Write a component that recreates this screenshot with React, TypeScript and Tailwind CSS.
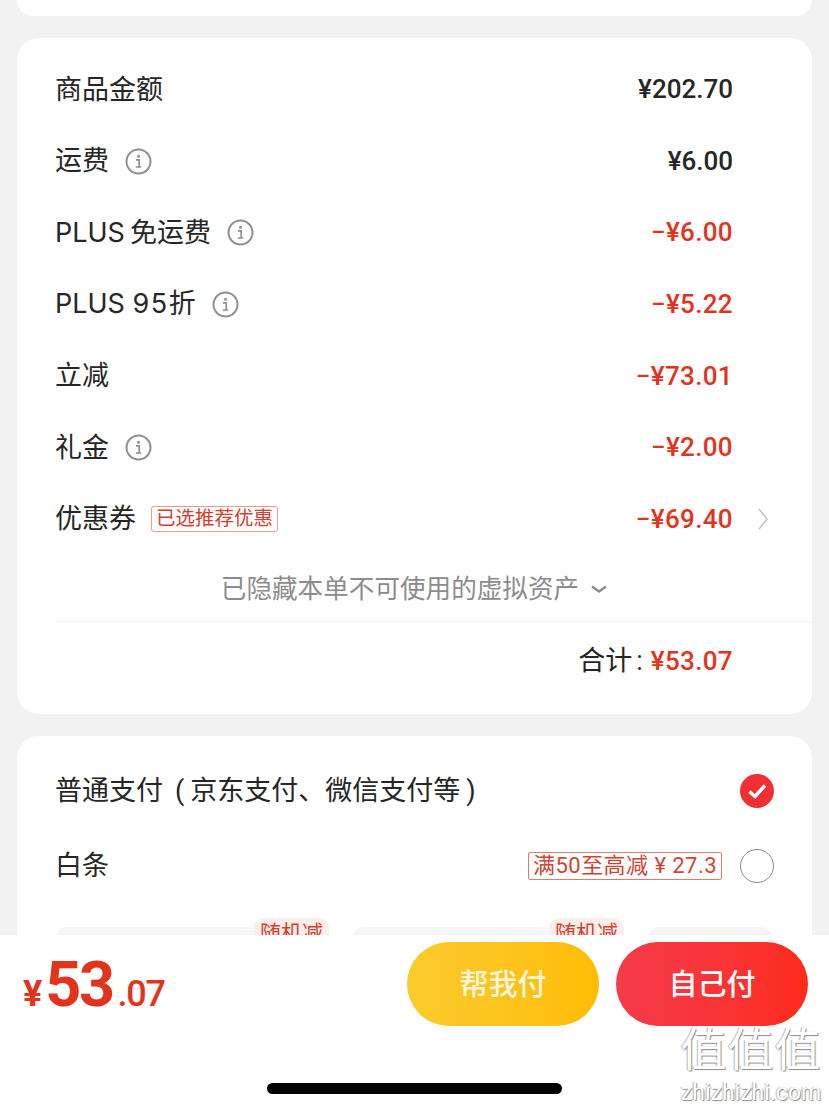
import type { ReactNode } from 'react';

const sans = "font-['Roboto','Noto_Sans_CJK_SC',sans-serif]";
const labelFont = "font-['Inter','Noto_Sans_CJK_SC',sans-serif]";

function InfoIcon() {
  return (
    <svg width="27" height="27" viewBox="0 0 27 27" fill="none" className="shrink-0">
      <circle cx="13.5" cy="13.5" r="12" stroke="#8f8f8f" strokeWidth="2" />
      <circle cx="13.5" cy="8.2" r="1.5" fill="#8f8f8f" />
      <path d="M11 11.8h3.2v7M10.8 19h5.4" stroke="#8f8f8f" strokeWidth="1.7" />
    </svg>
  );
}

function Row({
  label,
  value,
  red,
  info,
}: {
  label: ReactNode;
  value: string;
  red?: boolean;
  info?: boolean;
}) {
  return (
    <div className="h-[71.6px] flex items-center justify-between pr-[79px]">
      <div className={`flex items-center gap-[16px] text-[27px] text-[#262626] ${labelFont}`}>
        <span>{label}</span>
        {info && <InfoIcon />}
      </div>
      <span
        className={
          red
            ? 'text-[26px] font-medium tracking-[0.35px] text-[#e2341d]'
            : 'text-[26px] font-medium text-[#262626]'
        }
      >
        {value}
      </span>
    </div>
  );
}

export default function App() {
  return (
    <div className={`relative h-[1111px] w-[829px] overflow-hidden bg-[#f2f2f2] ${sans}`}>
      <div className="h-[935px] overflow-hidden px-[17px]">
        <div className="h-[16px] rounded-b-[20px] bg-white" />

        <section className="mt-[22px] h-[676px] rounded-[22px] bg-white pl-[38px] pt-[16px]">
          <Row label="商品金额" value="¥202.70" />
          <Row label="运费" value="¥6.00" info />
          <Row
            label={
              <>
                PLUS<span className="ml-[5px]">免运费</span>
              </>
            }
            value="−¥6.00"
            red
            info
          />
          <Row
            label={
              <>
                PLUS <span className="tracking-[1.5px]">95</span>折
              </>
            }
            value="−¥5.22"
            red
            info
          />
          <Row label="立减" value="−¥73.01" red />
          <Row label="礼金" value="−¥2.00" red info />

          <div className="h-[71.6px] flex items-center justify-between pr-[43px]">
            <div className="flex items-center gap-[15px] text-[27px] text-[#262626]">
              <span>优惠券</span>
              <span className="h-[26px] rounded-[3px] border border-[#eb9a8e] px-[4px] text-[19.5px] leading-[24px] text-[#d5402c]">
                已选推荐优惠
              </span>
            </div>
            <div className="flex items-center gap-[24px]">
              <span className="text-[26px] font-medium tracking-[0.35px] text-[#e2341d]">−¥69.40</span>
              <svg width="12" height="24" viewBox="0 0 12 24" fill="none">
                <path d="M2 2l8 10-8 10" stroke="#c4c4c4" strokeWidth="1.6" />
              </svg>
            </div>
          </div>

          <div className="flex h-[66px] items-center justify-center gap-[11px] pr-[38px] pt-[2px] text-[25.6px] text-[#8c8c8c]">
            <span>已隐藏本单不可使用的虚拟资产</span>
            <svg width="18" height="10" viewBox="0 0 18 10" fill="none">
              <path d="M2 2.5l7 5 7-5" stroke="#8c8c8c" strokeWidth="2.4" />
            </svg>
          </div>

          <div className="flex h-[80px] items-center justify-end gap-[8px] border-t border-[#f5f5f5] pr-[79px]">
            <span className="text-[27px] text-[#262626]">
              合计<span className="ml-[4px]">:</span>
            </span>
            <span className="text-[26px] font-medium tracking-[0.35px] text-[#e2341d]">¥53.07</span>
          </div>
        </section>

        <section className="mt-[22px] h-[300px] rounded-[22px] bg-white pl-[38px] pr-[38px]">
          <div className="flex h-[110px] items-center justify-between">
            <span className="text-[27px] text-[#262626]">
              普通支付<span className="ml-[12px] mr-[6px]">(</span>京东支付、微信支付等
              <span className="ml-[6px]">)</span>
            </span>
            <svg width="34" height="34" viewBox="0 0 34 34">
              <circle cx="17" cy="17" r="17" fill="#ee3035" />
              <path d="M9.5 17.5l5.5 5 10-11" fill="none" stroke="#fff" strokeWidth="3.4" />
            </svg>
          </div>
          <div className="-mt-[3px] flex h-[46px] items-center justify-between">
            <span className="text-[27px] text-[#262626]">白条</span>
            <div className="flex items-center gap-[18px]">
              <span className="h-[28px] rounded-[2px] border border-[#dd7b6e] px-[4px] text-[22px] leading-[26px] tracking-[0.45px] text-[#cf4534]">
                满50至高减 ¥ 27.3
              </span>
              <span className="h-[34px] w-[34px] rounded-full border border-[#8a8a8a]" />
            </div>
          </div>

          <div className="mt-[38px] flex gap-[23px] pr-[1px]">
            <div className="relative h-[40px] w-[274px] rounded-t-[12px] bg-[#f7f7f7]">
              <span className="absolute right-0 -top-[9px] rounded-[10px] bg-[#fdeeec] px-[6px] text-[21px] leading-[30px] text-[#d5402c]">
                随机减
              </span>
            </div>
            <div className="relative h-[40px] w-[272px] rounded-t-[12px] bg-[#f7f7f7]">
              <span className="absolute right-0 -top-[9px] rounded-[10px] bg-[#fdeeec] px-[6px] text-[21px] leading-[30px] text-[#d5402c]">
                随机减
              </span>
            </div>
            <div className="ml-[1px] h-[40px] flex-1 rounded-t-[12px] bg-[#f5f5f5]" />
          </div>
        </section>
      </div>

      <footer className="h-[176px] bg-white">
        <div className="flex h-[98px] items-center justify-between pl-[23px] pr-[21px]">
          <div className="mt-[6px] flex items-baseline font-bold text-[#e2341d]">
            <span className="mr-[3px] text-[36px]">¥</span>
            <span className="text-[63px] leading-none tracking-[-2.5px]">53</span>
            <span className="ml-[5px] text-[36px] font-medium tracking-[-1.3px]">.07</span>
          </div>
          <div className="flex gap-[17px]">
            <button className="h-[84px] w-[192px] rounded-full bg-gradient-to-r from-[#fbcb2c] to-[#ffbd00] pt-[3px] text-[29px] font-medium text-[#fdf6dc]">
              帮我付
            </button>
            <button className="h-[84px] w-[192px] rounded-full bg-gradient-to-r from-[#f53a4a] to-[#fd2c1a] pt-[3px] text-[29px] font-medium text-white">
              自己付
            </button>
          </div>
        </div>
        <div className="flex justify-center pt-[50px]">
          <div className="h-[11px] w-[295px] rounded-full bg-black" />
        </div>
      </footer>

      <div className="absolute left-[678px] top-[1026px] w-[146px] text-center text-white [text-shadow:1px_1px_1px_#8a8a8a,-1px_0_1px_#b5b5b5]">
        <div className="text-[46px] leading-[48px] tracking-[1px]">值值值</div>
        <div className="mt-[6px] text-[23px] leading-[26px]">zhizhizhi.com</div>
      </div>
    </div>
  );
}
